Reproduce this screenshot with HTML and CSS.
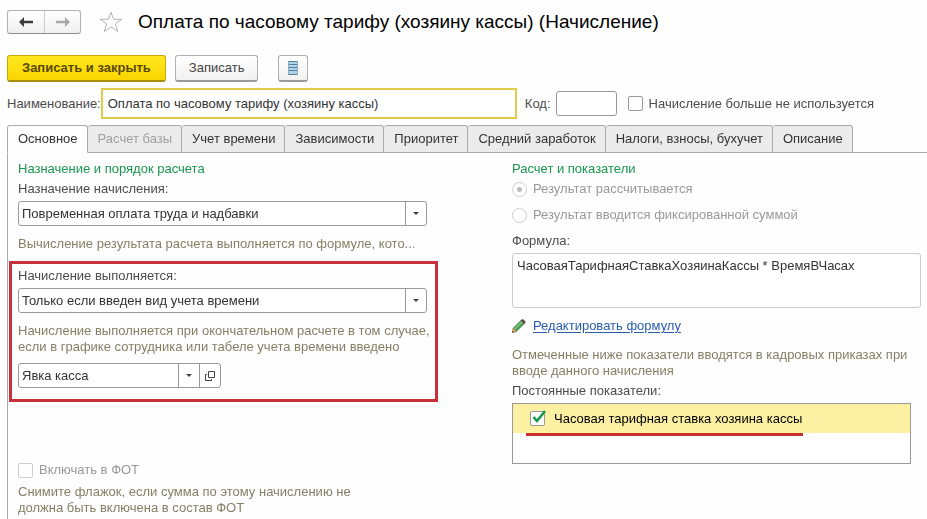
FILE: index.html
```
<!DOCTYPE html>
<html lang="ru">
<head>
    <meta charset="UTF-8">
    <meta name="viewport" content="width=device-width, initial-scale=1.0">
    <title>Оплата по часовому тарифу (хозяину кассы) (Начисление)</title>
    <link rel="stylesheet" href="styles.css">
</head>
<body>
    <header class="title-bar">
        <div class="nav-buttons">
            <button class="nav-btn" type="button" aria-label="Назад">
                <svg width="14" height="10" viewBox="0 0 14 10"><path d="M0 5L5 0V3.7H14V6.3H5V10Z" fill="#3c3c3c"/></svg>
            </button>
            <button class="nav-btn" type="button" aria-label="Вперед">
                <svg width="14" height="10" viewBox="0 0 14 10"><path d="M14 5L9 0V3.7H0V6.3H9V10Z" fill="#a9a9a9"/></svg>
            </button>
        </div>
        <button class="star-btn" type="button" aria-label="В избранное">
            <svg width="24" height="22" viewBox="0 0 24 22"><path d="M12 1.2L14.6 8.3H22.8L16.3 12.9L18.8 20.6L12 15.9L5.2 20.6L7.7 12.9L1.2 8.3H9.4Z" fill="#fff" stroke="#b4b4b4"/></svg>
        </button>
        <h1>Оплата по часовому тарифу (хозяину кассы) (Начисление)</h1>
    </header>

    <div class="toolbar">
        <button class="btn btn-primary" type="button">Записать и закрыть</button>
        <button class="btn" type="button">Записать</button>
        <button class="btn btn-icon" type="button" aria-label="Список">
            <svg width="12" height="16" viewBox="0 0 12 16">
                <rect x="1" y="1" width="10" height="14" fill="#b5d3e6"/>
                <path d="M1 1.5H11M1 4.5H11M1 7.5H11M1 10.5H11M1 14.5H11" stroke="#52809c"/>
                <path d="M1.5 1V15M10.5 1V15" stroke="#86abc2"/>
            </svg>
        </button>
    </div>

    <div class="name-row">
        <label for="name">Наименование:</label>
        <input class="name-input" id="name" type="text" value="Оплата по часовому тарифу (хозяину кассы)" autofocus>
        <label class="code-label" for="code">Код:</label>
        <input class="code-input" id="code" type="text">
        <label class="check unused"><input type="checkbox">Начисление больше не используется</label>
    </div>

    <nav class="tabs">
        <button class="tab active" type="button">Основное</button>
        <button class="tab" type="button" disabled>Расчет базы</button>
        <button class="tab" type="button">Учет времени</button>
        <button class="tab" type="button">Зависимости</button>
        <button class="tab" type="button">Приоритет</button>
        <button class="tab" type="button">Средний заработок</button>
        <button class="tab" type="button">Налоги, взносы, бухучет</button>
        <button class="tab" type="button">Описание</button>
    </nav>

    <main class="panel">
        <section class="column">
            <h2>Назначение и порядок расчета</h2>
            <label for="purpose">Назначение начисления:</label>
            <div class="combo">
                <select id="purpose"><option>Повременная оплата труда и надбавки</option></select>
                <span class="arrow"></span>
            </div>
            <p class="hint">Вычисление результата расчета выполняется по формуле, кото...</p>

            <div class="highlight">
                <label for="condition">Начисление выполняется:</label>
                <div class="combo">
                    <select id="condition"><option>Только если введен вид учета времени</option></select>
                    <span class="arrow"></span>
                </div>
                <p class="hint hint-lines">Начисление выполняется при окончательном расчете в том случае,<br>если в графике сотрудника или табеле учета времени введено</p>
                <div class="combo combo-short">
                    <select aria-label="Вид учета времени"><option>Явка касса</option></select>
                    <span class="arrow"></span>
                    <button class="open-btn" type="button" aria-label="Открыть">
                        <svg width="10" height="10" viewBox="0 0 10 10"><path d="M3.5 0.5H9.5V6.5H3.5ZM2 3.5H0.5V9.5H6.5V8" fill="none" stroke="#444"/></svg>
                    </button>
                </div>
            </div>

            <label class="check fot"><input type="checkbox" disabled>Включать в ФОТ</label>
            <p class="hint hint-narrow">Снимите флажок, если сумма по этому начислению не должна быть включена в состав ФОТ</p>
        </section>

        <section class="column">
            <h2>Расчет и показатели</h2>
            <div class="radios">
                <label class="check"><input type="radio" name="result" checked disabled>Результат рассчитывается</label>
                <label class="check"><input type="radio" name="result" disabled>Результат вводится фиксированной суммой</label>
            </div>
            <label for="formula">Формула:</label>
            <textarea id="formula" readonly>ЧасоваяТарифнаяСтавкаХозяинаКассы * ВремяВЧасах</textarea>
            <div class="edit-formula">
                <svg width="14" height="14" viewBox="0 0 14 14">
                    <path d="M1 9L8.4 1.6L12.2 5.2L4.8 12.6Z" fill="#4c9a58"/>
                    <path d="M2.6 10.4L10 3" stroke="#8fce8a" stroke-width="1.2"/>
                    <path d="M8.4 1.6L10 0.3Q13 0.4 13.6 3.8L12.2 5.2Z" fill="#5a4a42"/>
                    <path d="M1 9L4.8 12.6L0.4 13.6Z" fill="#d9ae6c" stroke="#8a6a3a" stroke-width="0.6"/>
                    <path d="M0.3 13.7L0.8 12L2 13.2Z" fill="#333"/>
                </svg>
                <a href="#formula">Редактировать формулу</a>
            </div>
            <p class="hint">Отмеченные ниже показатели вводятся в кадровых приказах при вводе данного начисления</p>
            <h3>Постоянные показатели:</h3>
            <ul class="indicators">
                <li><label class="check"><input type="checkbox" checked>Часовая тарифная ставка хозяина кассы</label></li>
            </ul>
        </section>
    </main>

    <script>
        // Put the cursor at the end of the name
        const nameInput = document.getElementById('name');
        nameInput.focus();
        nameInput.setSelectionRange(nameInput.value.length, nameInput.value.length);
    </script>
</body>
</html>
```
FILE: styles.css
```
* {
    box-sizing: border-box;
}

body {
    margin: 0;
    padding: 9px 0 0 7px;
    min-height: 100vh;
    display: flex;
    flex-direction: column;
    background: #fefefe;
    color: #4d4d4d;
    font: 13px/16px "Liberation Sans", Arial, sans-serif;
}

button, input, select, textarea {
    font: inherit;
    color: #333;
}

h1, h2, h3, p, ul {
    margin: 0;
    padding: 0;
    font-size: 13px;
    font-weight: normal;
}

svg {
    display: block;
}

.title-bar {
    display: flex;
    align-items: center;
    height: 26px;
}

.title-bar h1 {
    margin-left: 15px;
    color: #000;
    font-size: 19px;
    line-height: 26px;
    white-space: nowrap;
}

.nav-buttons {
    display: flex;
    height: 24px;
    border: 1px solid #b0b0b0;
    border-bottom-color: #8e8e8e;
    border-radius: 3px;
    background: linear-gradient(#fff, #f0f0f0);
}

.nav-btn {
    display: flex;
    align-items: center;
    justify-content: center;
    width: 36px;
    padding: 0;
    border: 0;
    background: none;
}

.nav-btn + .nav-btn {
    border-left: 1px solid #ccc;
}

.star-btn {
    margin-left: 18px;
    padding: 0;
    border: 0;
    background: none;
}

.toolbar {
    display: flex;
    gap: 9px;
    margin-top: 20px;
}

.btn {
    height: 27px;
    padding: 0 13px;
    border: 1px solid #b0b0b0;
    border-bottom: 2px solid #999;
    border-radius: 3px;
    background: linear-gradient(#fff, #f1f1f1);
    color: #444;
}

.btn-primary {
    padding: 0 14px;
    border-color: #c9a800;
    border-bottom-color: #a98f10;
    background: linear-gradient(#ffe81f, #f9d500);
    color: #5a4a00;
    font-weight: bold;
}

.btn-icon {
    margin-left: 11px;
    padding: 0 8px;
}

.name-row {
    display: flex;
    align-items: center;
    margin-top: 6px;
    padding-right: 53px;
}

.name-input {
    flex: 1;
    min-width: 0;
    height: 31px;
    padding: 0 5px;
    border: 2px solid #e0cb4a;
    background: #fff;
    outline: none;
}

.code-label {
    margin-left: 8px;
}

.code-input {
    width: 61px;
    height: 25px;
    margin-left: 5px;
    border: 1px solid #999;
    border-radius: 3px;
    background: #fff;
}

.unused {
    margin-left: 11px;
}

.check {
    display: flex;
    align-items: center;
    white-space: nowrap;
}

.check input {
    appearance: none;
    flex: none;
    width: 15px;
    height: 15px;
    margin: 0 6px 0 0;
    border: 1px solid #999;
    border-radius: 2px;
    background: #fff;
}

.check input:disabled {
    border-color: #ccc;
}

.check:has(input:disabled) {
    color: #999;
}

.check input[type="radio"] {
    border-radius: 50%;
}

.check input[type="radio"]:checked {
    background: radial-gradient(circle, #bbb 2px, #fff 3px);
}

.tabs {
    display: flex;
    margin-top: 6px;
}

.tabs::after {
    content: "";
    flex: 1;
    border-bottom: 1px solid #aaa;
}

.tab {
    height: 28px;
    padding: 0 9px 0 10px;
    border: 1px solid #aaa;
    border-left: 0;
    border-radius: 3px 3px 0 0;
    background: #ebebeb;
    white-space: nowrap;
}

.tab:disabled {
    color: #a0a0a0;
}

.tab.active {
    border-left: 1px solid #aaa;
    border-bottom-color: transparent;
    background: #fefefe;
}

.panel {
    flex: 1;
    display: grid;
    grid-template-columns: 1fr 1fr;
    gap: 85px;
    padding: 8px 6px 0 10px;
    border-left: 1px solid #aaa;
}

.column {
    display: flex;
    flex-direction: column;
    min-width: 0;
}

.column h2 {
    margin-bottom: 4px;
    color: #1b9650;
}

.combo {
    display: flex;
    position: relative;
    height: 25px;
    margin-top: 4px;
    border: 1px solid #999;
    border-radius: 3px;
    background: #fff;
}

.combo select {
    appearance: none;
    flex: 1;
    min-width: 0;
    padding: 0 24px 0 3px;
    border: 0;
    background: none;
}

/* drawn over the select, which still takes the click */
.arrow {
    position: absolute;
    top: 0;
    right: 0;
    bottom: 0;
    width: 21px;
    border-left: 1px solid #999;
    pointer-events: none;
}

.arrow::after {
    content: "";
    position: absolute;
    top: 10px;
    left: 7px;
    border: 3px solid transparent;
    border-top-color: #444;
    border-bottom: 0;
}

.combo-short {
    width: 203px;
    margin-top: 8px;
}

.combo-short .arrow {
    right: 21px;
}

.open-btn {
    display: flex;
    align-items: center;
    justify-content: center;
    width: 21px;
    padding: 0;
    border: 0;
    border-left: 1px solid #999;
    background: none;
}

.hint {
    margin-top: 10px;
    color: #857f66;
}

.hint-lines {
    white-space: nowrap;
}

.hint-narrow {
    max-width: 350px;
    margin-top: 6px;
}

.highlight {
    display: flex;
    flex-direction: column;
    margin: 9px -11px 0 -9px;
    padding: 4px 8px 11px 6px;
    border: 3px solid #c8303a;
}

.fot {
    margin-top: 60px;
}

.radios {
    display: flex;
    flex-direction: column;
    gap: 10px;
    margin-bottom: 10px;
}

textarea {
    display: block;
    height: 55px;
    margin-top: 4px;
    padding: 4px;
    border: 1px solid #ccc;
    border-radius: 3px;
    background: #fff;
    outline: none;
    resize: none;
}

.edit-formula {
    display: flex;
    align-items: center;
    gap: 7px;
    margin-top: 10px;
}

.edit-formula a {
    color: #2a5db0;
    text-underline-offset: 2px;
}

.edit-formula + .hint {
    margin-top: 13px;
}

.column h3 {
    margin: 4px 0;
}

.indicators {
    height: 61px;
    margin-right: 10px;
    border: 1px solid #999;
    background: #fff;
    list-style: none;
}

.indicators li {
    height: 29px;
    padding-left: 13px;
    background: #fcf0a3;
}

.indicators .check {
    position: relative;
    width: fit-content;
    height: 29px;
    padding-left: 4px;
    color: #000;
}

.indicators .check input {
    margin-right: 9px;
}

/* the tick reaches a little past the box */
.indicators input:checked::after {
    content: "";
    display: block;
    width: 15px;
    height: 14px;
    margin-top: -2px;
    background: url("data:image/svg+xml,%3Csvg xmlns='http://www.w3.org/2000/svg' viewBox='0 0 15 14'%3E%3Cpath d='M2.5 7L6 11L14 1' fill='none' stroke='%23159a4c' stroke-width='2.6'/%3E%3C/svg%3E");
}

/* red marker line under the indicator */
.indicators .check::after {
    content: "";
    position: absolute;
    top: 29px;
    left: 0;
    right: -1px;
    height: 3px;
    background: #c8302c;
}
```
